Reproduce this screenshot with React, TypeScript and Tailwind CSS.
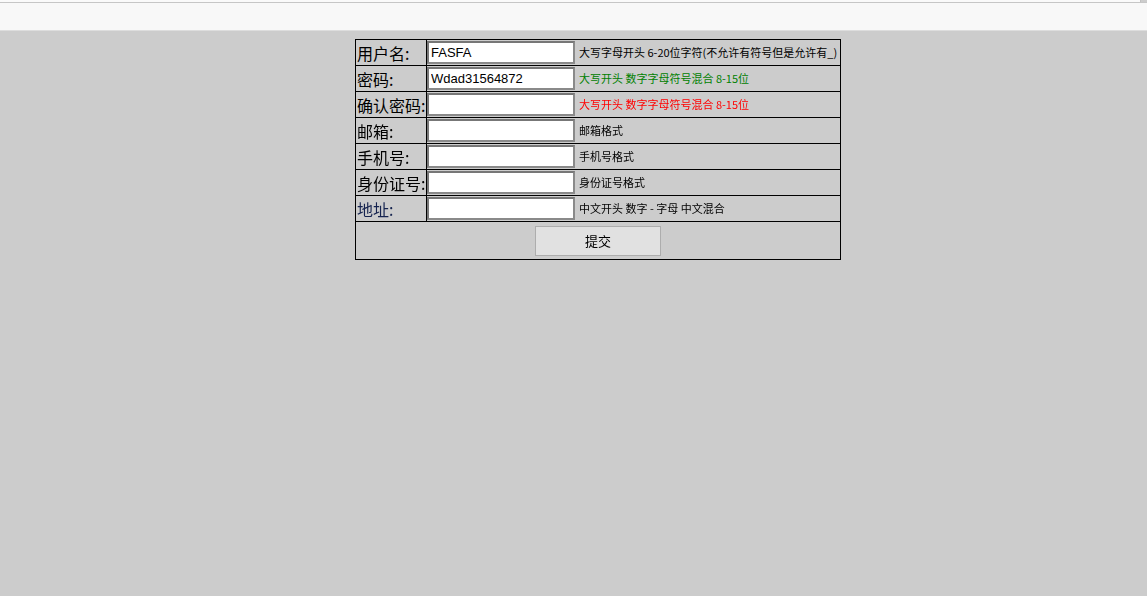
import React from 'react'

const rows = [
  { label: '用户名:', value: 'FASFA', hint: '大写字母开头 6-20位字符(不允许有符号但是允许有_)', color: 'text-black' },
  { label: '密码:', value: 'Wdad31564872', hint: '大写开头 数字字母符号混合 8-15位', color: 'text-[#008000]' },
  { label: '确认密码:', value: '', hint: '大写开头 数字字母符号混合 8-15位', color: 'text-[#ff0000]', focus: true },
  { label: '邮箱:', value: '', hint: '邮箱格式', color: 'text-black' },
  { label: '手机号:', value: '', hint: '手机号格式', color: 'text-black' },
  { label: '身份证号:', value: '', hint: '身份证号格式', color: 'text-black' },
  { label: '地址:', value: '', hint: '中文开头 数字 - 字母 中文混合', color: 'text-black', navy: true },
]

export default function App() {
  return (
    <div className="min-h-[596px] bg-[#cccccc] font-['Noto_Sans_CJK_SC',sans-serif]">
      {/* browser-ish top bar */}
      <div className="h-[2px] bg-[#fafafa] border-r border-[#c0c0c0] w-[1141px]" />
      <div className="h-[29px] bg-[#f8f8f8] border-t border-b border-[#c6c6c6] border-b-[#dddddd]" />

      <table className="ml-[355px] mt-[8px] w-[486px] table-fixed border-collapse border border-black">
        <colgroup>
          <col className="w-[71px]" />
          <col />
        </colgroup>
        <tbody>
          {rows.map((r) => (
            <tr key={r.label} className="h-[26px]">
              <td className={`border border-black p-0 pl-[1px] whitespace-nowrap overflow-visible text-[16px] leading-[24px] ${r.navy ? 'text-[#15234f]' : 'text-black'}`}>
                {r.label}
              </td>
              <td className="border border-black p-0 whitespace-nowrap">
                <div className="flex items-center h-[25px]">
                  <input
                    defaultValue={r.value}
                    autoFocus={r.focus}
                    className="shrink-0 w-[148px] h-[23px] bg-white border-2 border-[#8a8a8a] border-t-[#777777] border-l-[#777777] px-[2px] text-[13px] text-black font-['Liberation_Sans',sans-serif] outline-none caret-black"
                  />
                  <span className={`ml-[4px] text-[11px] ${r.color}`}>{r.hint}</span>
                </div>
              </td>
            </tr>
          ))}
          <tr>
            <td colSpan={2} className="h-[38px] border border-black p-0">
              <div className="flex justify-center pt-[3px] pb-[3px]">
                <button className="w-[126px] h-[30px] bg-[#e1e1e1] border border-[#adadad] text-[13px] text-black">
                  提交
                </button>
              </div>
            </td>
          </tr>
        </tbody>
      </table>
    </div>
  )
}
